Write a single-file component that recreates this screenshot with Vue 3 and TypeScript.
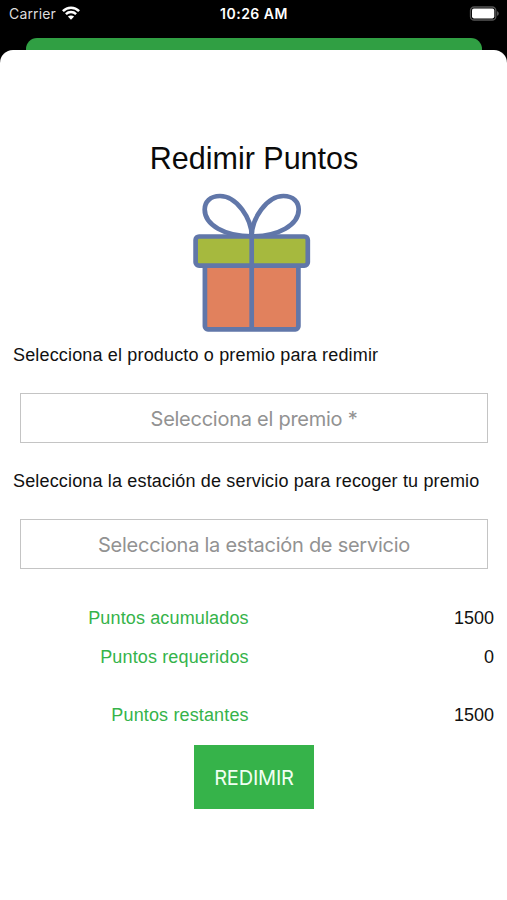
<script setup lang="ts">
interface PointRow {
  label: string
  value: number
  total?: boolean
}

const rows: PointRow[] = [
  { label: 'Puntos acumulados', value: 1500 },
  { label: 'Puntos requeridos', value: 0 },
  { label: 'Puntos restantes', value: 1500, total: true },
]
</script>

<template>
  <div class="screen">
    <header class="status">
      <div class="carrier">
        <span>Carrier</span>
        <svg class="wifi" viewBox="0 0 18 14" aria-hidden="true">
          <path d="M.9 5.1C5.4 .5 12.6 .5 17.1 5.1" />
          <path d="M3.9 8.2C6.8 5.4 11.2 5.4 14.1 8.2" />
          <path class="dot" d="M5.9 10.6C7.7 9 10.3 9 12.1 10.6L9 13.8Z" />
        </svg>
      </div>
      <span class="time">10:26 AM</span>
      <svg class="battery" viewBox="0 0 31 15" aria-hidden="true">
        <rect class="shell" x="1.5" y="1" width="25.3" height="13" rx="3.6" />
        <rect class="charge" x="3" y="2.6" width="22.3" height="9.8" rx="1.8" />
        <path class="tip" d="M28 5.2C30.4 5.8 30.4 9.2 28 9.8Z" />
      </svg>
    </header>
    <div class="behind"></div>
    <main class="sheet">
      <h1>Redimir Puntos</h1>
      <svg class="gift" viewBox="0 0 120 142" aria-hidden="true">
        <path class="bow" d="M59.7 44C59.7 27 45 4 28 4C18 4 12.7 10 12.7 17.5C12.7 33 33 44.3 59.7 44.3" />
        <path class="bow" d="M59.7 44C59.7 27 74.4 4 91.4 4C101.4 4 106.7 10 106.7 17.5C106.7 33 86.4 44.3 59.7 44.3" />
        <rect class="box" x="12.9" y="60" width="93.5" height="77.3" rx="3" />
        <rect class="lid" x="3.6" y="44.5" width="112.2" height="29.2" rx="3.5" />
        <path class="ribbon" d="M59.7 43V137" />
      </svg>
      <p class="label first">Selecciona el producto o premio para redimir</p>
      <button class="picker" type="button"><span>Selecciona el premio *</span></button>
      <p class="label second">Selecciona la estación de servicio para recoger tu premio</p>
      <button class="picker" type="button"><span>Selecciona la estación de servicio</span></button>
      <dl class="points">
        <div v-for="row in rows" :key="row.label" class="row" :class="{ total: row.total }">
          <dt>{{ row.label }}</dt>
          <dd>{{ row.value }}</dd>
        </div>
      </dl>
      <button class="redeem" type="button"><span>REDIMIR</span></button>
    </main>
  </div>
</template>

<style>
body {
  margin: 0;
  background: #000;
}
</style>

<style scoped>
.screen {
  box-sizing: border-box;
  width: 100%;
  height: 900px;
  display: flex;
  flex-direction: column;
  overflow: hidden;
  background: #000;
  font-family: "Liberation Sans", Arial, sans-serif;
}
.status {
  height: 38px;
  flex: none;
  box-sizing: border-box;
  padding: 5px 7px 0 9px;
  display: grid;
  grid-template-columns: 1fr auto 1fr;
  align-items: start;
  color: #fff;
  font: 14px/18px Inter, sans-serif;
}
.carrier {
  display: flex;
  gap: 6px;
  color: #ddd;
  letter-spacing: 0.15px;
}
.wifi {
  width: 18px;
  height: 14px;
  margin-top: 1px;
  fill: none;
  stroke: #fff;
  stroke-width: 2.5;
}
.wifi .dot {
  fill: #fff;
  stroke: none;
}
.time {
  font-weight: 600;
  letter-spacing: 0.5px;
  margin-left: -1px;
}
.battery {
  width: 31px;
  height: 15px;
  margin-top: 1px;
  justify-self: end;
}
.shell {
  fill: none;
  stroke: #555;
  stroke-width: 1.3;
}
.charge {
  fill: #fff;
}
.tip {
  fill: #555;
}
.behind {
  flex: none;
  height: 24px;
  margin: 0 25px 0 26px;
  border-radius: 11px 11px 0 0;
  background: #309f43;
}
.sheet {
  flex: 1;
  margin-top: -12px;
  border-radius: 13px 13px 0 0;
  background: #fff;
  display: flex;
  flex-direction: column;
  position: relative;
}
h1 {
  margin: 90px 0 0;
  padding-left: 1px;
  font-size: 30.5px;
  line-height: 36px;
  font-weight: 400;
  text-align: center;
  color: #0a0a0a;
}
.gift {
  width: 120px;
  height: 142px;
  margin: 16px 0 0 192px;
  stroke: #6177a9;
  stroke-width: 4.7;
}
.bow,
.ribbon {
  fill: none;
}
.box {
  fill: #e1815d;
}
.lid {
  fill: #a6b93e;
}
.label {
  margin: 0 0 0 13px;
  font-size: 18px;
  line-height: 22px;
  letter-spacing: 0.16px;
  white-space: nowrap;
  color: #111;
}
.first {
  margin-top: 10px;
}
.second {
  margin-top: 27px;
}
button {
  font-family: Inter, sans-serif;
  padding: 0;
}
.picker {
  height: 50px;
  margin: 27px 19px 0 20px;
  padding-top: 1px;
  border: 1px solid #c4c4c4;
  background: #fff;
  color: #929292;
  font-size: 20px;
  letter-spacing: -0.26px;
}
.points {
  margin: 38px 13px 0 0;
  font-size: 18px;
  line-height: 22px;
}
.row {
  display: flex;
  justify-content: space-between;
  margin-bottom: 17px;
}
.row.total {
  margin: 36px 0 0;
}
dt {
  width: 248.7px;
  text-align: right;
  letter-spacing: 0.14px;
  color: #35b34a;
}
dd {
  margin: 0;
  color: #111;
}
.redeem {
  width: 120px;
  height: 64px;
  margin: 19px 0 0 194px;
  padding-top: 1px;
  border: 0;
  background: #36b34a;
  color: #f0fff2;
  font-size: 20px;
  letter-spacing: -0.2px;
}
</style>
